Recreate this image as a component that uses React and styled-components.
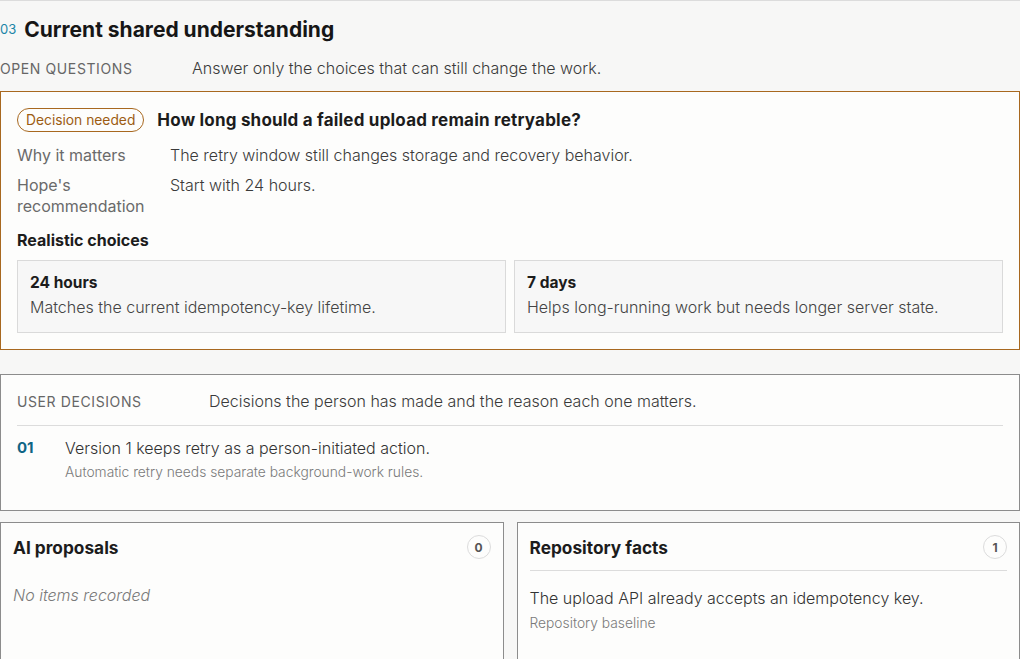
import styled, { createGlobalStyle } from 'styled-components'

const GlobalStyle = createGlobalStyle`
    body {
        margin: 0;
        background: #f7f7f6;
        font-family: Inter, 'Noto Sans', sans-serif;
        color: #1c1c1c;
    }
`

const Page = styled.div`
    width: 1020px;
    border-top: 1px solid #dcdcdc;
    padding-top: 14px;
`
const Heading = styled.div`
    display: flex;
    align-items: center;
    gap: 8px;
    height: 28px;
`
const Number = styled.span`
    font-size: 13px;
    color: #1a86a8;
`
const Title = styled.h2`
    margin: 0;
    font-size: 21px;
    font-weight: 700;
    color: #161616;
`
const Intro = styled.div`
    display: flex;
    align-items: center;
    margin-top: 15px;
    height: 20px;
`
const Kicker = styled.span`
    width: ${(p) => p.$width}px;
    flex-shrink: 0;
    font-size: 14px;
    letter-spacing: 0.6px;
    text-transform: uppercase;
    color: #666;
`
const IntroText = styled.span`
    font-size: 16px;
    font-weight: 300;
    color: #3a3a3a;
`
const Card = styled.div`
    border: 1px solid ${(p) => p.$border || '#8c8c8c'};
    background: #fdfdfc;
    padding: ${(p) => p.$pad || '16px'};
    margin-top: ${(p) => p.$top || 0}px;
`
const QuestionRow = styled.div`
    display: flex;
    align-items: center;
    gap: 13px;
`
const Pill = styled.span`
    border: 1px solid #a8681f;
    border-radius: 12px;
    padding: 3px 8px;
    font-size: 13.8px;
    line-height: 16px;
    color: #9c5c12;
`
const Question = styled.div`
    font-size: 17px;
    font-weight: 700;
    letter-spacing: 0.2px;
`
const Facts = styled.div`
    display: grid;
    grid-template-columns: 153px 1fr;
    row-gap: 9px;
    margin-top: 13px;
    font-size: 16px;
    line-height: 21px;
`
const FactLabel = styled.div`
    color: #6a6a6a;
`
const FactValue = styled.div`
    font-weight: 300;
    color: #3a3a3a;
`
const Subhead = styled.div`
    margin-top: 13px;
    font-size: 16px;
    font-weight: 700;
    line-height: 20px;
`
const Choices = styled.div`
    display: grid;
    grid-template-columns: 1fr 1fr;
    gap: 8px;
    margin-top: 10px;
`
const Choice = styled.div`
    background: #f7f7f7;
    border: 1px solid #dadada;
    padding: 12px 12px 15px;
`
const ChoiceTitle = styled.div`
    font-size: 15.5px;
    font-weight: 700;
    line-height: 20px;
`
const ChoiceText = styled.div`
    margin-top: 4px;
    font-size: 16px;
    font-weight: 300;
    line-height: 20px;
    color: #444;
`
const DecisionHead = styled.div`
    display: flex;
    align-items: center;
    height: 20px;
    padding-bottom: 14px;
    border-bottom: 1px solid #dcdcdc;
`
const Decision = styled.div`
    display: grid;
    grid-template-columns: 48px 1fr;
    padding: 12px 0 13px;
`
const DecisionNo = styled.span`
    font-size: 15px;
    font-weight: 700;
    line-height: 20px;
    color: #0f6585;
`
const DecisionText = styled.div`
    font-size: 16px;
    font-weight: 300;
    line-height: 20px;
    color: #333;
`
const Note = styled.div`
    margin-top: ${(p) => p.$top || 5}px;
    font-size: 13.8px;
    font-weight: 300;
    line-height: 18px;
    color: #7a7a7a;
`
const Columns = styled.div`
    display: grid;
    grid-template-columns: 1fr 1fr;
    gap: 13px;
    margin-top: 11px;
`
const ListHead = styled.div`
    display: flex;
    align-items: center;
    justify-content: space-between;
    height: 24px;
    ${(p) => p.$divided && 'padding-bottom: 11px; border-bottom: 1px solid #dcdcdc;'}
`
const ListTitle = styled.div`
    font-size: 17.3px;
    font-weight: 700;
`
const Count = styled.span`
    width: 22px;
    height: 22px;
    border: 1px solid #dcdcdc;
    border-radius: 50%;
    display: flex;
    align-items: center;
    justify-content: center;
    font-size: 12px;
    font-weight: 700;
    color: #555;
`
const Empty = styled.div`
    margin-top: 26px;
    font-size: 16px;
    font-style: italic;
    font-weight: 300;
    line-height: 20px;
    color: #7a7a7a;
`
const FactText = styled.div`
    margin-top: 17px;
    font-size: 16px;
    font-weight: 300;
    line-height: 20px;
    color: #333;
`

export default function App() {
    return (
        <Page>
            <GlobalStyle />
            <Heading>
                <Number>03</Number>
                <Title>Current shared understanding</Title>
            </Heading>
            <Intro>
                <Kicker $width={192}>Open questions</Kicker>
                <IntroText>Answer only the choices that can still change the work.</IntroText>
            </Intro>

            <Card $border='#a8681f' $top={13}>
                <QuestionRow>
                    <Pill>Decision needed</Pill>
                    <Question>How long should a failed upload remain retryable?</Question>
                </QuestionRow>
                <Facts>
                    <FactLabel>Why it matters</FactLabel>
                    <FactValue>The retry window still changes storage and recovery behavior.</FactValue>
                    <FactLabel>
                        Hope's
                        <br />
                        recommendation
                    </FactLabel>
                    <FactValue>Start with 24 hours.</FactValue>
                </Facts>
                <Subhead>Realistic choices</Subhead>
                <Choices>
                    <Choice>
                        <ChoiceTitle>24 hours</ChoiceTitle>
                        <ChoiceText>Matches the current idempotency-key lifetime.</ChoiceText>
                    </Choice>
                    <Choice>
                        <ChoiceTitle>7 days</ChoiceTitle>
                        <ChoiceText>Helps long-running work but needs longer server state.</ChoiceText>
                    </Choice>
                </Choices>
            </Card>

            <Card $top={24}>
                <DecisionHead>
                    <Kicker $width={192}>User decisions</Kicker>
                    <IntroText>Decisions the person has made and the reason each one matters.</IntroText>
                </DecisionHead>
                <Decision>
                    <DecisionNo>01</DecisionNo>
                    <div>
                        <DecisionText>Version 1 keeps retry as a person-initiated action.</DecisionText>
                        <Note>Automatic retry needs separate background-work rules.</Note>
                    </div>
                </Decision>
            </Card>

            <Columns>
                <Card $pad='12px 12px 30px'>
                    <ListHead>
                        <ListTitle>AI proposals</ListTitle>
                        <Count>0</Count>
                    </ListHead>
                    <Empty>No items recorded</Empty>
                </Card>
                <Card $pad='12px 12px 30px'>
                    <ListHead $divided>
                        <ListTitle>Repository facts</ListTitle>
                        <Count>1</Count>
                    </ListHead>
                    <FactText>The upload API already accepts an idempotency key.</FactText>
                    <Note $top={6}>Repository baseline</Note>
                </Card>
            </Columns>
        </Page>
    )
}
